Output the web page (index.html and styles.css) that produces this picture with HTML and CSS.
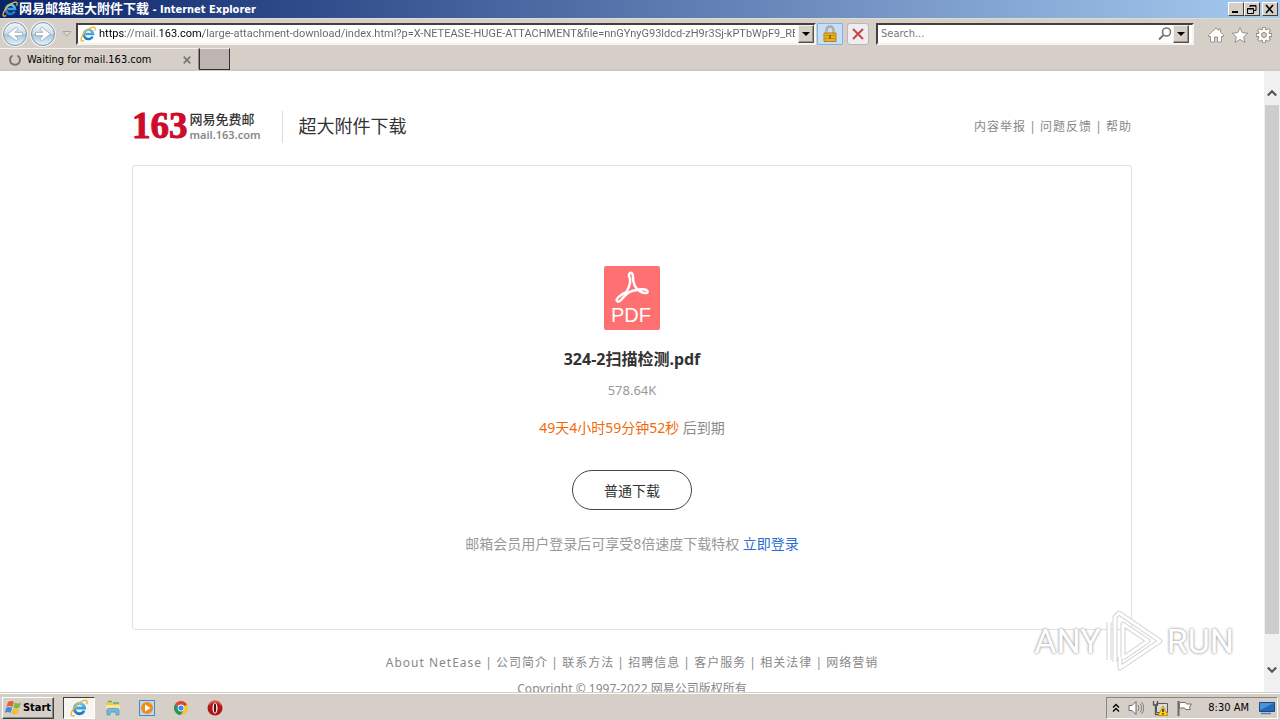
FILE: index.html
```html
<!DOCTYPE html>
<html lang="zh-CN">
<head>
<meta charset="utf-8">
<title>网易邮箱超大附件下载</title>
<link rel="stylesheet" href="styles.css">
</head>
<body>
<svg class="defs" width="0" height="0" aria-hidden="true">
  <defs>
    <linearGradient id="ie-blue" x1="0" y1="0" x2="0" y2="1"><stop offset="0" stop-color="#5cc4f4"/><stop offset="1" stop-color="#1a78c8"/></linearGradient>
    <linearGradient id="orb" x1="0" y1="0" x2="0" y2="1"><stop offset="0" stop-color="#f2f6f9"/><stop offset=".48" stop-color="#cfdfe9"/><stop offset=".52" stop-color="#a9c4d8"/><stop offset="1" stop-color="#e4f6fe"/></linearGradient>
    <symbol id="ie" viewBox="0 0 16 16">
      <path d="M12.600 10.400A4.600 4.600 0 1 1 13 8H5.500" fill="none" stroke="url(#ie-blue)" stroke-width="2.500"/>
      <path d="M4.200 14.600C1.200 16 .2 14.400 1.900 10.700 4 6.500 8.500 2.600 12 1.400 15.300.4 15.800 2.200 14.600 4.600" fill="none" stroke="#f0b52a" stroke-width="1.300"/>
    </symbol>
  </defs>
</svg>

<header class="titlebar">
  <svg class="icon16"><use href="#ie"/></svg>
  <span class="title"><span class="title-cjk">网易邮箱超大附件下载</span> - Internet Explorer</span>
  <div class="win-buttons">
    <button class="win-btn" aria-label="Minimize"><svg width="12" height="10"><path d="M2 8h6" stroke="#000" stroke-width="2"/></svg></button>
    <button class="win-btn" aria-label="Restore"><svg width="12" height="10"><path d="M4 3V1.500h6v5H8M4 2h6M1.500 4.500h6v5h-6zM1 5h7" fill="none" stroke="#000"/></svg></button>
    <button class="win-btn close" aria-label="Close"><svg width="12" height="10"><path d="M2 1l7 8M9 1L2 9" stroke="#000" stroke-width="1.600"/></svg></button>
  </div>
</header>

<nav class="navbar">
  <div class="history">
    <button class="orb" aria-label="Back"><svg width="26" height="26" viewBox="0 0 26 26"><circle cx="13" cy="13" r="11.500" fill="url(#orb)" stroke="#7892a8"/><path d="M20.500 11.300H13l3.200-3.200-1.900-1.900L5.500 13l8.800 6.800 1.900-1.900-3.200-3.200h7.500z" fill="#fff" stroke="#8fa8bb" stroke-width=".8"/></svg></button>
    <button class="orb" aria-label="Forward"><svg width="26" height="26" viewBox="0 0 26 26"><circle cx="13" cy="13" r="11.500" fill="url(#orb)" stroke="#7892a8"/><path d="M5.500 11.300H13L9.800 8.100l1.900-1.900L20.500 13l-8.800 6.800-1.900-1.900 3.200-3.200H5.500z" fill="#fff" stroke="#8fa8bb" stroke-width=".8"/></svg></button>
    <button class="recent" aria-label="Recent pages"><svg width="10" height="8"><path d="M1 1.500h8L5 6z" fill="#ddd8d2" stroke="#aaa49c"/></svg></button>
  </div>
  <div class="field address">
    <svg class="icon16"><use href="#ie"/></svg>
    <input class="url" type="text" aria-label="Address" value="https://mail.163.com/large-attachment-download/index.html?p=X-NETEASE-HUGE-ATTACHMENT&amp;file=nnGYnyG93ldcd-zH9r3Sj-kPTbWpF9_REw7">
    <button class="drop" aria-label="Show address list"><svg width="8" height="4"><path d="M0 0h8L4 4z"/></svg></button>
  </div>
  <button class="tool lock" aria-label="Security report"><svg width="16" height="18" viewBox="0 0 16 18"><path d="M4.500 9V5a3.500 3.500 0 0 1 7 0v4" fill="none" stroke="#8f8a70" stroke-width="2"/><path d="M4.500 9V5a3.500 3.500 0 0 1 7 0v4" fill="none" stroke="#d8d3b8" stroke-width=".7"/><path d="M2 8h12v8.500H2z" fill="#e9b023" stroke="#b9810e"/><path d="M3 10.500h10M3 13.500h10" stroke="#c88e15"/><path d="M8 10v4" stroke="#7e5a08" stroke-width="1.500"/></svg></button>
  <button class="tool stop" aria-label="Stop"><svg width="14" height="14" viewBox="0 0 14 14"><path d="M2 2l10 10M12 2L2 12" stroke="#c8434c" stroke-width="2"/></svg></button>
  <div class="field search">
    <input type="text" aria-label="Search" placeholder="Search...">
    <button class="find" aria-label="Search the web"><svg width="16" height="16" viewBox="0 0 16 16"><circle cx="9.500" cy="6" r="4" fill="none" stroke="#777" stroke-width="1.600"/><path d="M6.500 9L2 13.500" stroke="#777" stroke-width="2"/></svg></button>
    <button class="drop" aria-label="Search options"><svg width="8" height="4"><path d="M0 0h8L4 4z"/></svg></button>
  </div>
  <div class="ie-tools">
    <button aria-label="Home"><svg width="18" height="18" viewBox="0 0 18 18"><path d="M1.500 9L9 2l2.500 2.300V3h2v3.200L16.500 9v1.500h-2V16h-4v-5h-3v5h-4v-5.500h-2z" fill="#fff" stroke="#97928b"/></svg></button>
    <button aria-label="Favorites"><svg width="18" height="18" viewBox="0 0 18 18"><path d="M9 1.500l2.200 5.200 5.600.5-4.200 3.700 1.300 5.500L9 13.500l-4.900 2.900 1.300-5.500L1.200 7.200l5.600-.5z" fill="#fff" stroke="#97928b"/></svg></button>
    <button aria-label="Tools"><svg width="18" height="18" viewBox="0 0 18 18"><g stroke="#8f8a83" stroke-width="4"><path d="M9 1v16M1 9h16M3.300 3.300l11.400 11.400M14.700 3.300L3.300 14.700"/></g><circle cx="9" cy="9" r="6.300" fill="#8f8a83"/><g stroke="#fff" stroke-width="2.200"><path d="M9 1.800v14.400M1.800 9h14.400M3.900 3.900l10.200 10.200M14.100 3.900L3.900 14.100"/></g><circle cx="9" cy="9" r="5.400" fill="#fff"/><circle cx="9" cy="9" r="2.500" fill="#d6cfc8" stroke="#8f8a83"/></svg></button>
  </div>
</nav>

<div class="tabs">
  <div class="tab">
    <svg width="14" height="14" viewBox="0 0 14 14"><path d="M4.500 2.500a5 5 0 1 0 5 0" fill="none" stroke="#77736f" stroke-width="2"/></svg>
    <span>Waiting for mail.163.com</span>
    <button class="tab-close" aria-label="Close tab"><svg width="8" height="8"><path d="M.7.7l6.600 6.600M7.300.7L.7 7.300" stroke="#7c7772" stroke-width="1.700"/></svg></button>
  </div>
  <button class="new-tab" aria-label="New tab"></button>
</div>

<div class="viewport">
  <div class="page">
    <header class="mail-head">
      <a class="logo" href="#"><span class="logo-num">163</span><span class="logo-text"><b>网易免费邮</b><small>mail.163.com</small></span></a>
      <h1>超大附件下载</h1>
      <div class="links"><a href="#">内容举报</a><i>|</i><a href="#">问题反馈</a><i>|</i><a href="#">帮助</a></div>
    </header>
    <main class="card">
      <svg class="pdf" width="56" height="64" viewBox="0 0 56 64">
        <rect width="56" height="64" rx="2" fill="#ff7073"/>
        <path d="M14 35.500C9.500 34 17 28.500 22.500 26 26 19.500 27.500 14.500 25.300 11 23.500 7 28.800 4.500 28.900 10 28.900 15.500 30 21.500 35.500 25 39 27.500 44.500 28 43.500 25.200 42 22.500 35 23.300 29 24.800 23 26.200 20.500 30 17.500 33.500 16.200 35 15 36 14 35.500z" fill="none" stroke="#fff" stroke-width="2.500" stroke-linejoin="round"/>
        <text class="pdf-label" x="27" y="56" text-anchor="middle">PDF</text>
      </svg>
      <h2>324-2扫描检测.pdf</h2>
      <p class="size">578.64K</p>
      <p class="expiry"><em>49天4小时59分钟52秒</em> 后到期</p>
      <button class="download">普通下载</button>
      <p class="hint">邮箱会员用户登录后可享受8倍速度下载特权 <a href="#">立即登录</a></p>
    </main>
    <footer class="foot">
      <div class="foot-links"><a href="#">About NetEase</a><i>|</i><a href="#">公司简介</a><i>|</i><a href="#">联系方法</a><i>|</i><a href="#">招聘信息</a><i>|</i><a href="#">客户服务</a><i>|</i><a href="#">相关法律</a><i>|</i><a href="#">网络营销</a></div>
      <p>Copyright © 1997-2022 网易公司版权所有</p>
    </footer>
  </div>
  <div class="scrollbar">
    <button aria-label="Scroll up"><svg width="10" height="8"><path d="M.8 6.500L5 2.200l4.200 4.300" fill="none" stroke="#555" stroke-width="2.200"/></svg></button>
    <div class="thumb"></div>
    <button aria-label="Scroll down"><svg width="10" height="8"><path d="M.8 1.500L5 5.800l4.200-4.300" fill="none" stroke="#555" stroke-width="2.200"/></svg></button>
  </div>
  <div class="watermark">
    <span>ANY</span>
    <svg width="58" height="64" viewBox="0 0 58 64"><g fill="none" stroke-linejoin="round"><path d="M4 51V13M10 53V8l4-4 41 28-40 27V48M18 49V15l25 17-25 17" stroke="#d2d2d2" stroke-width="5"/><path d="M4 51V13M10 53V8l4-4 41 28-40 27V48M18 49V15l25 17-25 17" stroke="#fff" stroke-width="3"/></g></svg>
    <span>RUN</span>
  </div>
</div>

<footer class="taskbar">
  <button class="start"><svg width="17" height="16" viewBox="0 0 17 16"><path d="M3 2q3-2 6 0L7.500 7q-3-2-6 0z" fill="#e8622c"/><path d="M10 2.500q3 2 6 0L14.500 7.500q-3 2-6 0z" fill="#7db843"/><path d="M1.200 8q3-2 6 0L5.700 13q-3-2-6 0z" fill="#3f8fd6"/><path d="M8.200 8.500q3 2 6 0L12.700 13.500q-3 2-6 0z" fill="#f5bd2d"/></svg>Start</button>
  <div class="apps">
    <button class="app active" aria-label="Internet Explorer"><svg class="icon18"><use href="#ie"/></svg></button>
    <button class="app" aria-label="Explorer"><svg width="18" height="18" viewBox="0 0 18 18"><path d="M2 3h5l1 1.500h7V14H2z" fill="#e9c95e"/><path d="M4 2.500h4M9 4h6" stroke="#5fae62" stroke-width="1.500"/><path d="M2 6h14v5H2z" fill="#f7e59a"/><path d="M3 16v-5q0-1.500 1.500-1.500h9q1.500 0 1.500 1.500v5h-3v-3H6v3z" fill="#72b9e4" stroke="#4a93c4" stroke-width=".7"/></svg></button>
    <button class="app" aria-label="Media Player"><svg width="18" height="18" viewBox="0 0 18 18"><path d="M1.500 1.500h15v15h-15z" fill="#b9dcf5" stroke="#4f86b9"/><circle cx="9" cy="9" r="6" fill="#f28a1c"/><path d="M7 5.500v7l5.500-3.500z" fill="#fff"/></svg></button>
    <button class="app" aria-label="Chrome"><svg width="18" height="18" viewBox="0 0 18 18"><circle cx="9" cy="9" r="7" fill="#f6c624"/><path d="M9 9L2.900 5.500a7 7 0 0 1 12.200 0z" fill="#dc4437"/><path d="M2.900 5.500A7 7 0 0 0 8.500 16L12 10.700 9 9z" fill="#24965a"/><circle cx="9" cy="9" r="3.400" fill="#fff"/><circle cx="9" cy="9" r="2.600" fill="#4285f4"/></svg></button>
    <button class="app" aria-label="Opera"><svg width="18" height="18" viewBox="0 0 18 18"><circle cx="9" cy="9" r="7.500" fill="#b51519"/><path d="M3 6a7 7 0 0 1 12 0" fill="none" stroke="#dd6560" stroke-width="1.500"/><ellipse cx="9" cy="9" rx="2.500" ry="5.500" fill="#fff"/><ellipse cx="9" cy="9" rx="1.200" ry="4.700" fill="#5c090b"/></svg></button>
  </div>
  <div class="tray">
    <button aria-label="Show hidden icons"><svg width="8" height="10"><path d="M1 4.500l3-3 3 3M1 8.500l3-3 3 3" fill="none" stroke="#000" stroke-width="1.300"/></svg></button>
    <button aria-label="Volume"><svg width="16" height="16" viewBox="0 0 16 16"><path d="M1 5.500h3l4-4v13l-4-4H1z" fill="#fff" stroke="#6b6865"/><path d="M10 5q2 3 0 6M12 3.500q3.500 4.500 0 9M13.800 2q4 6 0 12" fill="none" stroke="#85817d"/></svg></button>
    <button aria-label="Network"><svg width="16" height="16" viewBox="0 0 16 16"><path d="M4.500 3.500h11v9h-11z" fill="#d9d9d6" stroke="#5b5957"/><path d="M1.500 1v4h4V1M3.500 5v9.500h4" fill="none" stroke="#55524f" stroke-width="1.300"/><path d="M11 6l5 9.500H6z" fill="#fcd116" stroke="#ab8400" stroke-width=".7"/><path d="M11 9v3M11 13v1.400" stroke="#000" stroke-width="1.200"/></svg></button>
    <button aria-label="Action Center"><svg width="16" height="16" viewBox="0 0 16 16"><path d="M2.500 1v15" stroke="#6d6966" stroke-width="2"/><path d="M3.500 2.500h6l1 1.500h5l-2 3 .8 2.500H9.500L8.500 8h-5z" fill="#fff" stroke="#77736f"/></svg></button>
    <time>8:30 AM</time>
    <button aria-label="Show desktop"><svg width="16" height="14" viewBox="0 0 16 14"><path d="M.5 1.500h15v9H.5z" fill="#2768b9" stroke="#174984"/><path d="M1 2h14L1 9z" fill="#4a92dc"/><path d="M2 12.500h10" stroke="#4e7fb8" stroke-width="1.500"/></svg></button>
  </div>
</footer>
</body>
</html>
```
FILE: styles.css
```css
* { box-sizing: border-box; }
html, body { height: 100%; }
body {
  margin: 0;
  display: flex;
  flex-direction: column;
  overflow: hidden;
  background: #d6cfc8;
  color: #000;
  font: 11px/14px "DejaVu Sans Condensed", "Noto Sans CJK SC", sans-serif;
}
button { margin: 0; padding: 0; border: 0; background: none; font: inherit; color: inherit; display: flex; align-items: center; justify-content: center; }
input { font: inherit; border: 0; padding: 0; outline: 0; background: none; min-width: 0; }
a { color: inherit; text-decoration: none; }
h1, h2, p { margin: 0; }
svg { display: block; flex: none; }
i, em { font-style: normal; }
.defs { position: absolute; }
.icon16 { width: 16px; height: 16px; }
.icon18 { width: 18px; height: 18px; }

.titlebar {
  flex: none;
  display: flex;
  align-items: center;
  height: 18px;
  padding: 0 2px;
  gap: 1px;
  background: linear-gradient(90deg, #0a246a, #a6caf0);
  color: #fff;
  font-weight: bold;
}
.title { flex: 1; white-space: nowrap; }
.title-cjk { font-size: 13px; }
.win-buttons { display: flex; }
.win-btn { width: 16px; height: 14px; background: #d6cfc8; border: 1px solid; border-color: #fff #404040 #404040 #fff; }
.close { margin-left: 2px; }

.navbar { flex: none; display: flex; align-items: center; height: 30px; padding: 0 7px 0 2px; border-top: 1px solid #dfdbd0; }
.history { display: flex; align-items: center; width: 74px; gap: 2px; }
.orb { border-radius: 50%; background: #f4f4f3; }
.recent { margin-left: 4px; }
.field { display: flex; align-items: center; height: 22px; background: #fff; border: 2px solid; border-color: #45403e #f6f4f1 #f6f4f1 #45403e; }
.address { flex: 734; padding-left: 2px; gap: 3px; }
.url {
  flex: 1;
  font-family: Roboto, sans-serif;
  color: transparent;
  background: linear-gradient(90deg, #000 26px, #666 26px 61px, #000 61px 104px, #666 104px);
  background-clip: text;
  -webkit-background-clip: text;
}
.drop { flex: none; width: 16px; height: 18px; background: #d6cfc8; border: 1px solid; border-color: #f4f2ef #55514d #55514d #f4f2ef; box-shadow: inset -1px -1px #96918b; }
.tool { flex: none; width: 26px; height: 22px; border: 1px solid #7fb2e6; border-radius: 1px; }
.lock { margin-left: 1px; background: #c6dff8; }
.stop { width: 22px; margin: 0 7px 0 4px; background: #efedf0; border-color: #bab6ba; border-radius: 3px; }
.search { flex: 308; padding: 0 3px; }
.search input { flex: 1; }
.search input::placeholder { color: #777; opacity: 1; }
.ie-tools { display: flex; gap: 6px; margin: 2px 0 0 13px; }

.tabs { flex: none; display: flex; height: 23px; border-bottom: 2px solid #d0c9c1; }
.tab { display: flex; align-items: center; width: 199px; padding: 2px 7px 0 8px; gap: 5px; border-top: 1px solid #f4f1ed; border-right: 1px solid #8c8781; }
.tab span { flex: 1; }
.new-tab { width: 31px; height: 22px; background: #bdb5b1; border: 1px solid #33302e; border-top-color: #eeebe7; }

.viewport {
  position: relative;
  flex: 1;
  min-height: 0;
  display: flex;
  background: #fff;
  font-family: "Noto Sans", "Noto Sans CJK SC", sans-serif;
}
.page { flex: 1; overflow: hidden; display: flex; flex-direction: column; align-items: center; padding-top: 36px; }
.mail-head { width: 1000px; max-width: 100%; height: 58px; flex: none; display: flex; align-items: flex-start; padding-top: 4px; }
.logo { display: flex; align-items: center; height: 32px; padding-right: 21px; border-right: 1px solid #dcdcdc; gap: 2px; }
.logo-num { color: #cd0c2b; font: bold 37px/30px "Liberation Serif", serif; height: 32px; -webkit-text-stroke: 1px #cd0c2b; }
.logo-text { display: flex; flex-direction: column; }
.logo-text b { color: #333; font-size: 13px; line-height: 16px; font-weight: 500; }
.logo-text small { color: #888; font-size: 11px; line-height: 16px; font-weight: 600; }
h1 { margin-left: 16px; font-size: 18px; line-height: 30px; font-weight: 400; color: #333; }
.links { margin-left: auto; font-size: 12px; line-height: 32px; letter-spacing: 1px; color: #888; display: flex; }
.links i { width: 14px; text-align: center; }
.card {
  width: 1000px;
  max-width: 100%;
  flex: none;
  height: 465px;
  display: flex;
  flex-direction: column;
  align-items: center;
  padding-top: 100px;
  border: 1px solid #e0e0e0;
  border-radius: 3px;
  color: #888;
  font-size: 14px;
  line-height: 20px;
}
.pdf-label { font: 20px "Liberation Sans", sans-serif; fill: #fff; }
h2 { margin-top: 17px; font-size: 16px; line-height: 24px; color: #333; font-weight: 700; }
.size { margin-top: 9px; font-size: 13px; color: #999; }
.expiry { margin-top: 18px; }
.expiry em { color: #f06a0a; }
.download { width: 120px; height: 40px; margin-top: 32px; padding-top: 2px; border: 1px solid #444; border-radius: 20px; color: #333; background: #fff; }
.hint { margin-top: 24px; color: #999; }
.hint a { color: #2b6cd0; }
.foot { padding-top: 22px; color: #888; font-size: 12px; line-height: 22px; text-align: center; white-space: nowrap; }
.foot-links { display: flex; letter-spacing: 1px; }
.foot-links i { width: 14px; text-align: center; }
.foot p { margin-top: 4px; }

.scrollbar { flex: none; width: 16px; display: flex; flex-direction: column; background: #f0f0f0; padding: 14px 1px; }
.scrollbar button { height: 16px; }
.thumb { height: 529px; margin: 4px 0 auto; background: #cdcdcd; }
.watermark {
  position: absolute;
  right: 46px;
  bottom: 19px;
  display: flex;
  align-items: center;
  gap: 4px;
  color: #fff;
  font: 34px/64px Roboto, sans-serif;
  text-shadow: 0 0 3px #999, 0 0 2px #bbb;
  pointer-events: none;
}

.taskbar { flex: none; display: flex; align-items: center; height: 28px; padding: 2px 2px 0; border-top: 1px solid #d6cfc8; box-shadow: inset 0 1px #fff; }
.start { width: 52px; height: 22px; gap: 1px; font-weight: bold; border: 1px solid; border-color: #fff #404040 #404040 #fff; box-shadow: inset -1px -1px #8b8680; }
.apps { flex: 1; display: flex; gap: 2px; margin-left: 9px; }
.app { width: 32px; height: 22px; }
.active { background: #f7f5f2; border: 1px solid; border-color: #404040 #fff #fff #404040; }
.tray { display: flex; align-items: center; height: 22px; gap: 8px; padding: 0 2px 0 5px; border: 1px solid; border-color: #8b8680 #fff #fff #8b8680; }
.tray time { margin: 0 2px 0 8px; }
```
